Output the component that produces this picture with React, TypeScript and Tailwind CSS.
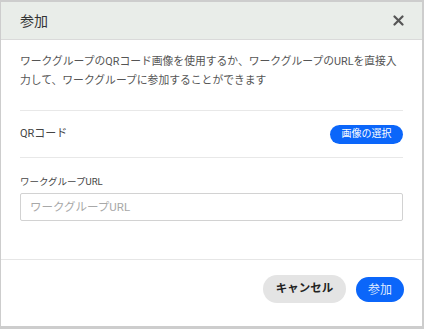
import { useState } from "react";

const font = { fontFamily: "Roboto, 'Noto Sans CJK JP', sans-serif" };

export default function App() {
  const [url, setUrl] = useState("");

  return (
    <div
      className="w-[424px] h-[329px] bg-[#cdcdcd] pt-[2px] pl-[1px] pr-[2px] pb-[3px]"
      style={font}
    >
      <div className="h-full bg-white flex flex-col">
        {/* header */}
        <div className="h-[38px] shrink-0 bg-[#e9ede9] border-b border-[#dadada] flex items-center justify-between pl-[19px] pr-[18px]">
          <span className="text-[14px] text-[#333] leading-none">参加</span>
          <button className="text-[#555] leading-none">
            <svg width="11" height="11" viewBox="0 0 11 11">
              <path
                d="M1.5 1.5L9.5 9.5M9.5 1.5L1.5 9.5"
                stroke="currentColor"
                strokeWidth="2.2"
                strokeLinecap="round"
              />
            </svg>
          </button>
        </div>

        {/* body */}
        <div className="px-[19px] flex flex-col">
          <p className="pt-[12px] text-[10.8px] leading-[19px] text-[#555]">
            ワークグループのQRコード画像を使用するか、ワークグループのURLを直接入力して、ワークグループに参加することができます
          </p>

          <div className="mt-[20px] border-t border-[#e8e8e8] h-[48px] border-b flex items-center justify-between">
            <span className="text-[11px] text-[#444]">QRコード</span>
            <button className="h-[19px] w-[73px] rounded-full bg-[#0b66fa] text-white text-[10px] leading-none">
              画像の選択
            </button>
          </div>

          <label className="mt-[18px] text-[9.5px] leading-[12px] text-[#444]">
            ワークグループURL
          </label>
          <input
            value={url}
            onChange={(e) => setUrl(e.target.value)}
            placeholder="ワークグループURL"
            className="mt-[5px] h-[28px] w-full border border-[#d2d2d2] rounded-[2px] px-[9px] text-[11.5px] text-[#333] placeholder:text-[#a8a8a8] outline-none"
          />
        </div>

        {/* footer */}
        <div className="mt-[38px] border-t border-[#e6e6e6] flex-1 flex justify-end items-start gap-[10px] pr-[18px] pt-[15px]">
          <button className="h-[28px] w-[83px] rounded-full bg-[#e4e4e4] text-[11.5px] font-bold text-[#222]">
            キャンセル
          </button>
          <button className="mt-[2px] h-[25px] w-[48px] rounded-full bg-[#0b66fa] text-[12px] text-[#dfeaff]">
            参加
          </button>
        </div>
      </div>
    </div>
  );
}
